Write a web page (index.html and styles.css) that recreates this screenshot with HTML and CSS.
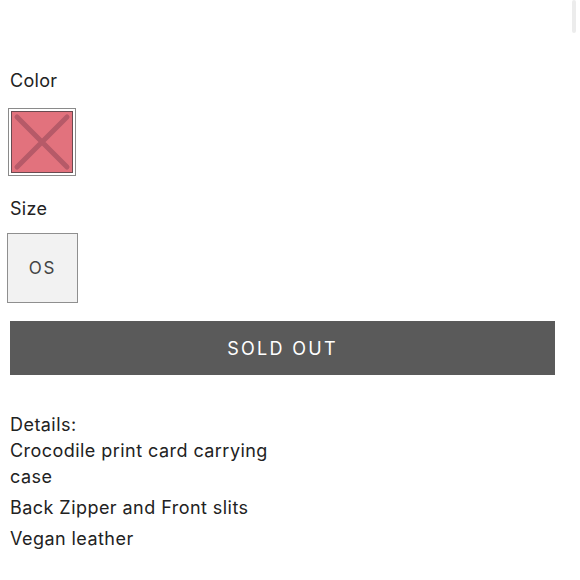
FILE: index.html
```html
<!DOCTYPE html>
<html>
<head>
<meta charset="utf-8">
<link rel="stylesheet" href="styles.css">
</head>
<body>
<div class="scroll-thumb"></div>
<main class="product">
  <section class="option">
    <h3 class="label">Color</h3>
    <div class="swatch-wrap">
      <div class="swatch">
        <svg class="cross" viewBox="0 0 58 58" width="58" height="58">
          <path d="M4 4 L54 54 M54 4 L4 54" stroke="#b65a68" stroke-width="5" stroke-linecap="round" fill="none"/>
        </svg>
      </div>
    </div>
  </section>
  <section class="option">
    <h3 class="label">Size</h3>
    <div class="size-box">OS</div>
  </section>
  <button class="sold-out">SOLD OUT</button>
  <section class="details">
    <p>Details:<br>Crocodile print card carrying<br>case</p>
    <p>Back Zipper and Front slits</p>
    <p>Vegan leather</p>
  </section>
</main>
</body>
</html>
```
FILE: styles.css
```css
html, body {
  margin: 0;
  padding: 0;
  background: #fff;
}
body {
  font-family: Inter, "Liberation Sans", sans-serif;
  color: #222;
}
.scroll-thumb {
  position: absolute;
  top: 0;
  right: 4px;
  width: 4px;
  height: 33px;
  background: #ececec;
  border-radius: 2px;
}
.product {
  padding: 70px 25px 0 10px;
  width: 545px;
}
.label {
  margin: 0;
  font-weight: 400;
  font-size: 18px;
  line-height: 22px;
  letter-spacing: 0.3px;
}
.option {
  display: flex;
  flex-direction: column;
}
.swatch-wrap {
  margin: 16px 0 0 -2px;
  width: 62px;
  height: 62px;
  border: 1px solid #8a8a8a;
  padding: 2px;
}
.swatch {
  width: 60px;
  height: 60px;
  border: 1px solid #6a4a50;
  background: #e2727d;
  display: flex;
  align-items: center;
  justify-content: center;
}
.cross {
  display: block;
}
.option + .option {
  margin-top: 22px;
}
.size-box {
  margin: 13px 0 0 -3px;
  width: 69px;
  height: 68px;
  border: 1.5px solid #8f8f8f;
  background: #f2f2f2;
  display: flex;
  align-items: center;
  justify-content: center;
  font-size: 17px;
  letter-spacing: 1.8px;
  color: #444;
}
.sold-out {
  display: block;
  margin-top: 18px;
  width: 545px;
  height: 54px;
  border: none;
  background: #5a5a5a;
  color: #fff;
  font-family: Inter, "Liberation Sans", sans-serif;
  font-size: 18px;
  letter-spacing: 2.3px;
  padding: 0;
}
.details {
  margin-top: 37px;
}
.details p {
  margin: 0 0 5px 0;
  font-size: 18px;
  line-height: 26px;
  letter-spacing: 0.45px;
}
```
